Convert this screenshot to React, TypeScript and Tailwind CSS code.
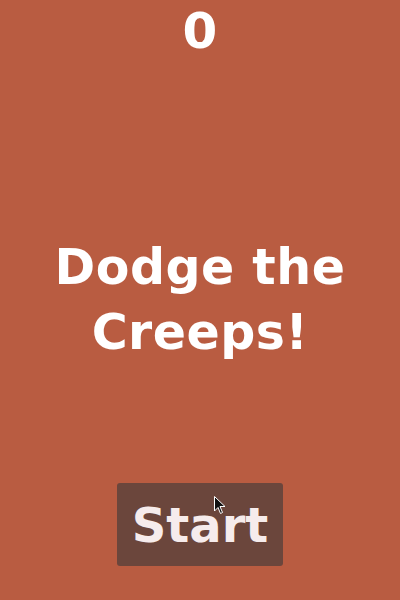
import React from "react";

export default function App() {
  const font = { fontFamily: '"DejaVu Sans", "Liberation Sans", sans-serif' };
  return (
    <div
      className="relative w-[400px] h-[600px] bg-[#b95c41] flex flex-col items-center text-white overflow-hidden"
      style={font}
    >
      <div className="mt-[6px] h-[50px] text-[50px] leading-[50px] font-bold">0</div>
      <div className="flex-1 flex items-center justify-center">
        <div className="text-center text-[49px] leading-[65px] font-bold tracking-[0.5px] mt-[60px]">
          Dodge the
          <br />
          Creeps!
        </div>
      </div>
      <button className="mb-[34px] w-[166px] h-[83px] rounded-[3px] bg-[#6b463c] text-[#f6ecec] text-[48px] font-bold leading-none flex items-center justify-center">
        Start
      </button>
      <svg
        className="absolute left-[214px] top-[496px]"
        width="12"
        height="19"
        viewBox="0 0 12 19"
      >
        <path d="M0.5 0.5 L0.5 15 L4 11.5 L6.5 17.5 L8.5 16.5 L6 10.5 L11 10.5 Z" fill="#111" stroke="#fff" strokeWidth="1" />
      </svg>
    </div>
  );
}
